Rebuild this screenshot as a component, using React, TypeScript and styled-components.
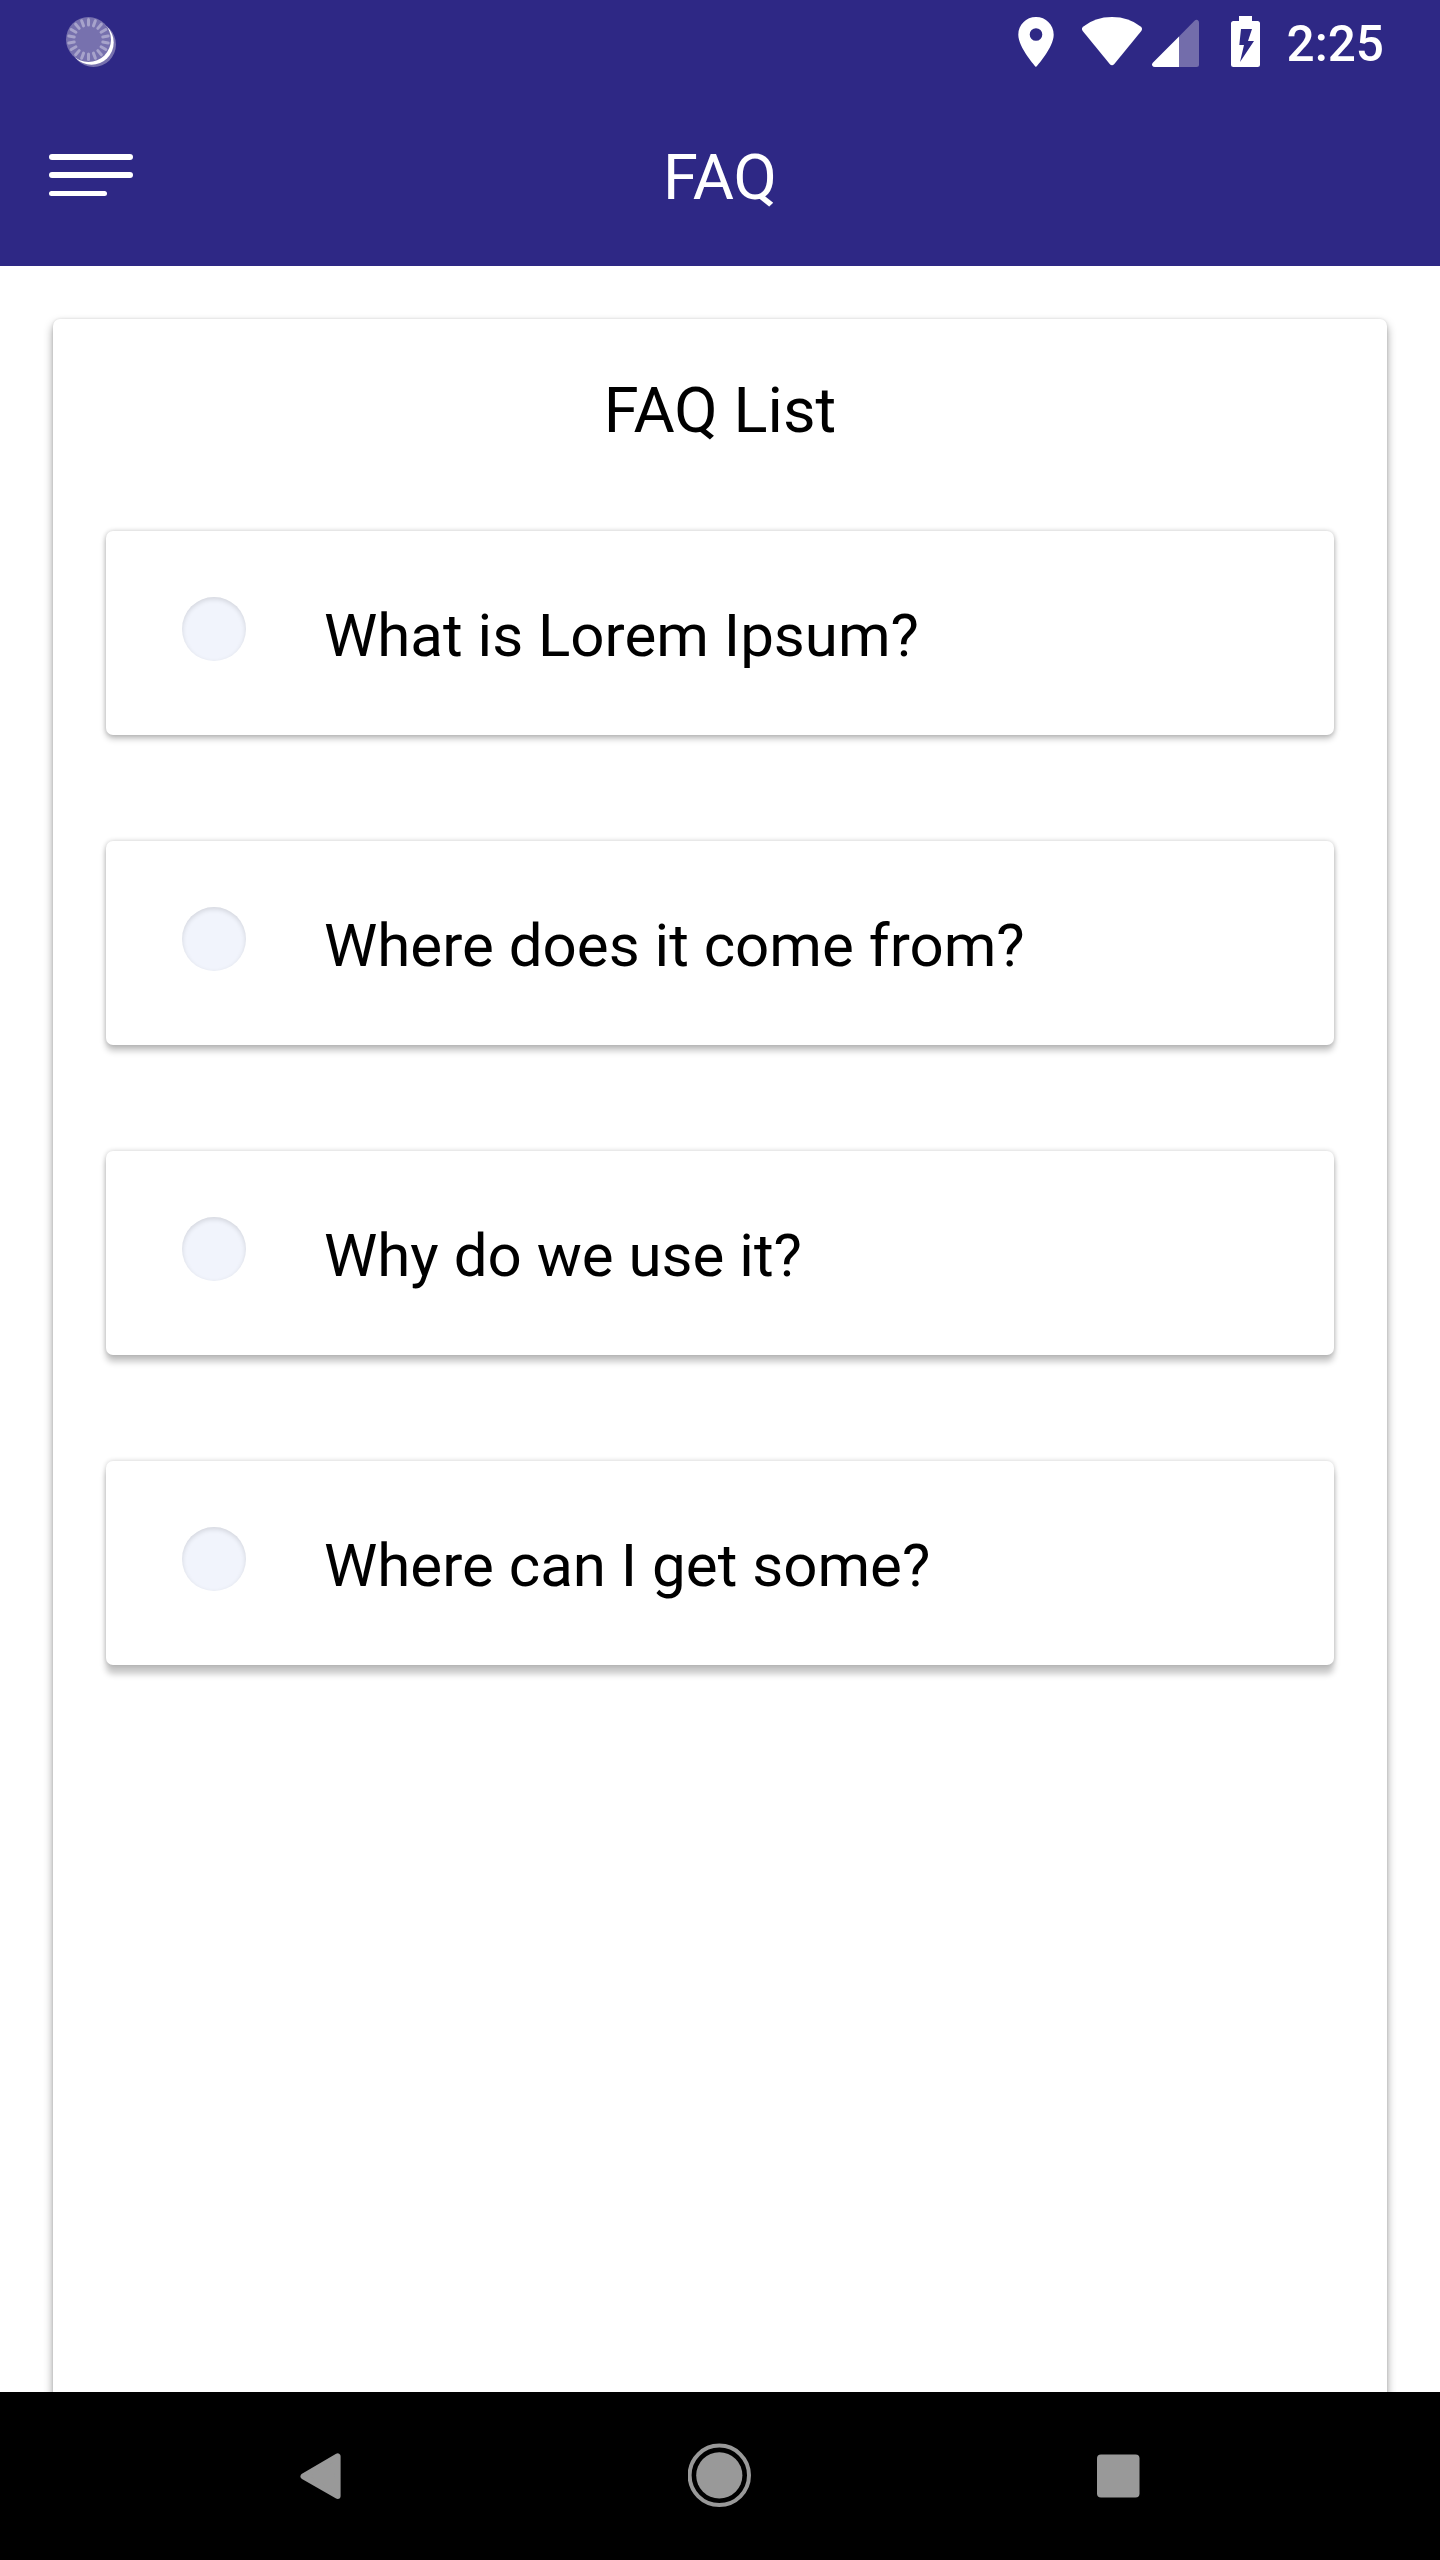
import React from "react";
import styled, { createGlobalStyle } from "styled-components";

const GlobalStyle = createGlobalStyle`
  *, *::before, *::after { box-sizing: border-box; }
  body {
    margin: 0;
    background: #fff;
    font-family: Roboto, "Liberation Sans", sans-serif;
  }
`;

const Screen = styled.div`
  width: 1440px;
  height: 2560px;
  display: flex;
  flex-direction: column;
  overflow: hidden;
  background: #fff;
`;

const Header = styled.header`
  flex: none;
  height: 266px;
  background: #2e2885;
  color: #fff;
`;

const StatusBar = styled.div`
  height: 84px;
  display: flex;
  justify-content: space-between;
  padding: 0 56px 0 64px;
`;

const StatusIcons = styled.div`
  display: flex;
`;

const Clock = styled.time`
  margin-left: 24px;
  padding-top: 15px;
  font-size: 49.5px;
  line-height: 59px;
  font-weight: 500;
`;

const AppBar = styled.div`
  height: 182px;
  display: grid;
  grid-template-columns: 160px 1fr 160px;
`;

const MenuButton = styled.button`
  display: flex;
  flex-direction: column;
  align-items: flex-start;
  gap: 12.7px;
  padding: 70px 0 0 49px;
  border: 0;
  background: none;
`;

const MenuLine = styled.span<{ $short?: boolean }>`
  width: ${(p) => (p.$short ? 58 : 84)}px;
  height: 5.6px;
  border-radius: 3px;
  background: #fff;
`;

const Title = styled.h1`
  margin: 0;
  padding-top: 55px;
  text-align: center;
  font-size: 63.2px;
  line-height: 76px;
  font-weight: 400;
`;

const Content = styled.main`
  flex: 1;
  min-height: 0;
  padding: 53px 53px 0;
  overflow: hidden;
`;

const ListCard = styled.section`
  height: 2200px;
  padding: 53px 53px 0;
  border-radius: 7px;
  background: #fff;
  box-shadow: 0 5px 10px rgba(0, 0, 0, 0.38), 0 0 3px rgba(0, 0, 0, 0.12);
`;

const ListTitle = styled.h2`
  margin: 0 0 83px;
  text-align: center;
  font-size: 63.2px;
  line-height: 76px;
  font-weight: 400;
  color: #000;
`;

const Items = styled.div`
  display: flex;
  flex-direction: column;
  gap: 106px;
`;

const Item = styled.article<{ $drop: number }>`
  height: 204px;
  display: flex;
  padding-left: 76px;
  border-radius: 7px;
  background: #fff;
  box-shadow: 0 ${(p) => p.$drop}px 6px rgba(0, 0, 0, 0.22),
    0 0 5px rgba(0, 0, 0, 0.2);
`;

const Bullet = styled.span`
  flex: none;
  width: 64px;
  height: 64px;
  margin-top: 66px;
  border-radius: 50%;
  background: #f1f4fc;
  box-shadow: inset 0 2px 5px rgba(0, 0, 0, 0.13);
`;

const Question = styled.p`
  margin: 68px 0 0 78px;
  font-size: 60.05px;
  line-height: 74px;
  color: #000;
  white-space: nowrap;
`;

const NavBar = styled.nav`
  flex: none;
  height: 168px;
  display: flex;
  justify-content: center;
  background: #000;
`;

const NavButton = styled.button`
  width: 399px;
  padding: 0;
  border: 0;
  background: none;
  display: flex;
  justify-content: center;
`;

const questions = [
  "What is Lorem Ipsum?",
  "Where does it come from?",
  "Why do we use it?",
  "Where can I get some?",
];

const ticks = Array.from({ length: 18 }, (_, i) => i * 20);

function SyncIcon() {
  return (
    <svg width="56" height="84" viewBox="64 0 56 84">
      <circle cx="93.5" cy="44.5" r="22.5" fill="#7771ae" />
      <circle cx="91.5" cy="42.5" r="22.2" fill="#fff" />
      <circle cx="88.5" cy="39.5" r="22.5" fill="#7771ae" />
      {ticks.map((a) => (
        <path
          key={a}
          d="M88.5 19.5V25"
          transform={`rotate(${a} 88.5 39.5)`}
          stroke="#a7a3cb"
          strokeWidth="3"
          strokeLinecap="round"
        />
      ))}
    </svg>
  );
}

function SystemIcons() {
  return (
    <svg width="250" height="84" viewBox="1013 0 250 84" fill="#fff">
      <path
        fillRule="evenodd"
        d="M1036 17c-9.900 0-17.700 7.800-17.700 17.700C1018.300 47.500 1036 67 1036 67s17.700-19.500 17.700-32.300C1053.700 24.800 1045.900 17 1036 17zm0 11.200a6.300 6.300 0 1 1 0 12.600a6.300 6.300 0 0 1 0-12.600z"
      />
      <path d="M1083 26.700Q1095 17 1112 17T1141 26.700Q1143 28.500 1141.300 31L1114.300 64Q1112 66.500 1109.700 64L1082.700 31Q1081 28.500 1083 26.700Z" />
      <path
        d="M1179 36.500L1194.500 20.700Q1196 19.500 1197.500 20Q1199 20.600 1199 22.500V64.500Q1199 67 1196.500 67H1179Z"
        fill="#736dab"
      />
      <path d="M1179 36.500L1152.800 62.700Q1151.300 64.300 1152.300 65.700Q1153 67 1155 67H1179Z" />
      <path
        fillRule="evenodd"
        d="M1239 16H1252V21H1257.500Q1260 21 1260 23.500V64.500Q1260 67 1257.500 67H1233.500Q1231 67 1231 64.500V23.500Q1231 21 1233.500 21H1239ZM1241 29L1239.300 45H1244L1240 62L1254 41H1248L1252 29Z"
      />
    </svg>
  );
}

export default function App() {
  return (
    <>
      <GlobalStyle />
      <Screen>
        <Header>
          <StatusBar>
            <SyncIcon />
            <StatusIcons>
              <SystemIcons />
              <Clock>2:25</Clock>
            </StatusIcons>
          </StatusBar>
          <AppBar>
            <MenuButton aria-label="Menu">
              <MenuLine />
              <MenuLine />
              <MenuLine $short />
            </MenuButton>
            <Title>FAQ</Title>
          </AppBar>
        </Header>
        <Content>
          <ListCard>
            <ListTitle>FAQ List</ListTitle>
            <Items>
              {questions.map((q, i) => (
                <Item key={q} $drop={4 + i * 1.4}>
                  <Bullet />
                  <Question>{q}</Question>
                </Item>
              ))}
            </Items>
          </ListCard>
        </Content>
        <NavBar>
          <NavButton aria-label="Back">
            <svg width="44" height="168" viewBox="299 2392 44 168">
              <path
                d="M303.500 2476.300L337.600 2456.300V2496Z"
                fill="#999"
                stroke="#999"
                strokeWidth="6"
                strokeLinejoin="round"
              />
            </svg>
          </NavButton>
          <NavButton aria-label="Home">
            <svg width="64" height="168" viewBox="688 2392 64 168">
              <circle cx="719.300" cy="2475.300" r="29.700" fill="none" stroke="#999" strokeWidth="4" />
              <circle cx="719.300" cy="2475.300" r="23.100" fill="#999" />
            </svg>
          </NavButton>
          <NavButton aria-label="Recents">
            <svg width="44" height="168" viewBox="1097 2392 44 168">
              <rect x="1097" y="2454.500" width="42.500" height="43" rx="4" fill="#999" />
            </svg>
          </NavButton>
        </NavBar>
      </Screen>
    </>
  );
}
